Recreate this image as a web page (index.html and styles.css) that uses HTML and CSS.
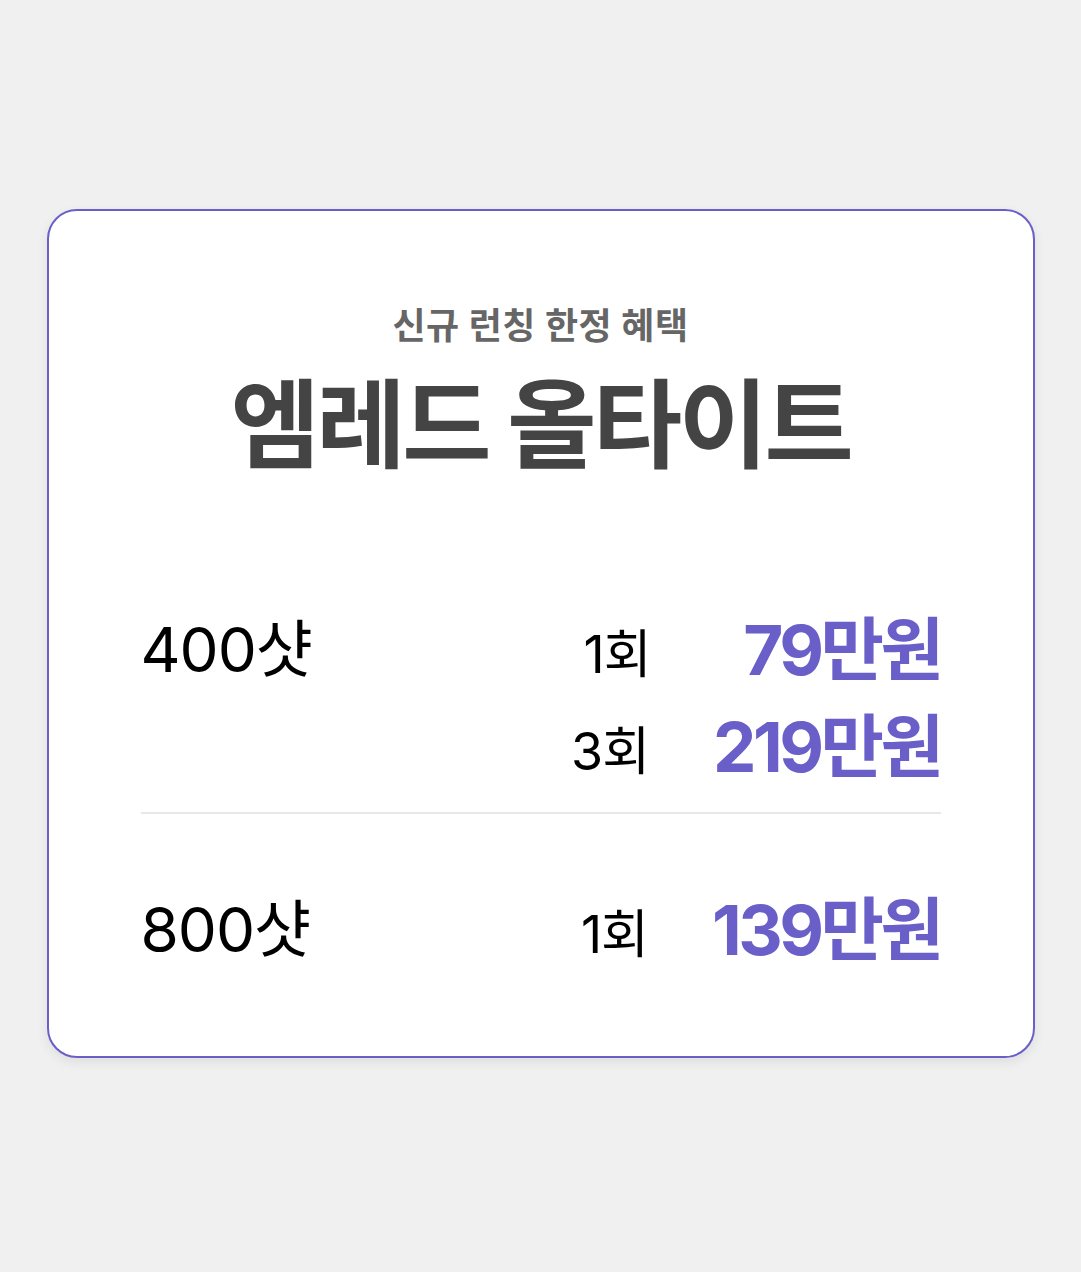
FILE: index.html
```html
<!DOCTYPE html>
<html lang="ko">
<head>
<meta charset="utf-8">
<link rel="stylesheet" href="styles.css">
</head>
<body>
<main class="page">
  <section class="card">
    <header class="head">
      <p class="eyebrow">신규 런칭 한정 혜택</p>
      <h1 class="title">엠레드 올타이트</h1>
    </header>
    <div class="group">
      <div class="shots">400샷</div>
      <div class="rows">
        <div class="row"><span class="times">1회</span><span class="price">79만원</span></div>
        <div class="row"><span class="times">3회</span><span class="price">219만원</span></div>
      </div>
    </div>
    <div class="divider"></div>
    <div class="group group-last">
      <div class="shots">800샷</div>
      <div class="rows">
        <div class="row"><span class="times">1회</span><span class="price">139만원</span></div>
      </div>
    </div>
  </section>
</main>
</body>
</html>
```
FILE: styles.css
```css
* { box-sizing: border-box; }
html, body { margin: 0; padding: 0; }
body {
  background: #f0f0f0;
  font-family: Inter, "Noto Sans CJK KR", "Noto Sans", sans-serif;
  width: 1081px;
  height: 1272px;
}
.page {
  padding-top: 209px;
  display: flex;
  justify-content: center;
}
.card {
  width: 988px;
  background: #fff;
  border: 2px solid #6a5fc8;
  border-radius: 30px;
  box-shadow: 0 4px 12px rgba(0,0,0,0.08);
  padding: 90px 92px 86px;
}
.head { text-align: center; }
.eyebrow {
  margin: 0;
  font-size: 36px;
  font-weight: 700;
  color: #666;
  line-height: 50px;
  letter-spacing: 0.5px;
}
.title {
  margin: 8px 0 0;
  font-size: 97px;
  font-weight: 700;
  color: #444;
  line-height: 132px;
  letter-spacing: -3.5px;
}
.group {
  display: flex;
  justify-content: space-between;
  align-items: flex-start;
  margin-top: 119px;
  padding-bottom: 25px;
}
.group-last { margin-top: 76px; padding-bottom: 0; }
.shots {
  font-size: 62px;
  line-height: 80px;
  color: #000;
  letter-spacing: -1px;
  white-space: nowrap;
}
.rows { display: flex; flex-direction: column; gap: 17px; }
.row {
  display: flex;
  align-items: center;
  justify-content: flex-end;
  height: 80px;
  white-space: nowrap;
}
.times {
  font-size: 52px;
  color: #000;
  letter-spacing: -1px;
  margin-right: 64px;
}
.price {
  min-width: 226px;
  margin-bottom: 10px;
  text-align: right;
  font-size: 69px;
  font-weight: 700;
  color: #6a5fc8;
  letter-spacing: -3.5px;
}
.divider {
  height: 2px;
  background: #e8e8e8;
}
```
